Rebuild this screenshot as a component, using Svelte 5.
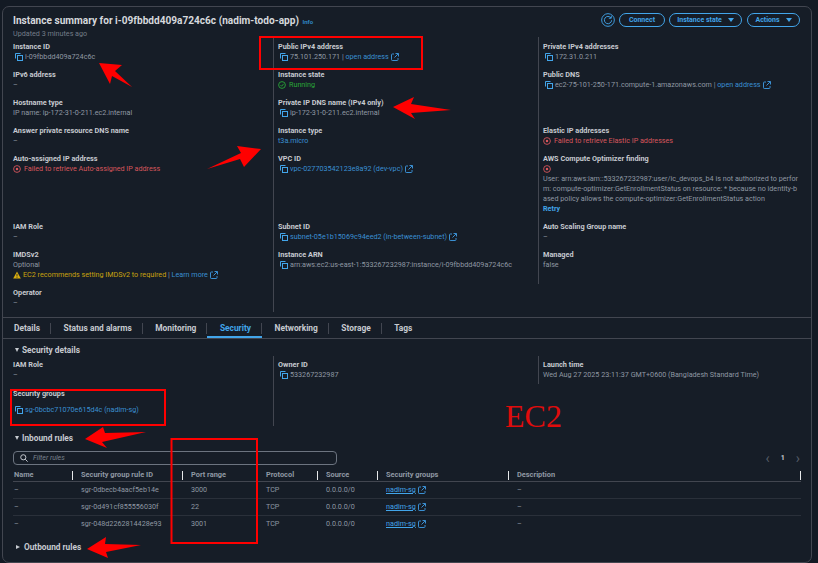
<script>
  const tabs = ["Details", "Status and alarms", "Monitoring", "Security", "Networking", "Storage", "Tags"];
  const active = "Security";
  const rules = [
    { id: "sgr-0dbecb4aacf5eb14e", port: "3000" },
    { id: "sgr-0d491cf855556030f", port: "22" },
    { id: "sgr-048d2262814428e93", port: "3001" },
  ];
  const columns = ["Name", "Security group rule ID", "Port range", "Protocol", "Source", "Security groups", "Description"];
</script>

{#snippet copy()}
  <svg class="copy" viewBox="0 0 8 8" fill="none" stroke="currentColor" stroke-width="1">
    <path d="M.5 5.500V.5H5.500" />
    <rect x="2.500" y="2.500" width="5" height="5" />
  </svg>
{/snippet}

{#snippet ext()}
  <svg class="ext" viewBox="0 0 8 8" fill="none" stroke="currentColor" stroke-width="1">
    <path d="M3 1H1.200a.7.7 0 0 0-.7.7v5.100c0 .4.3.7.7.7h5.100c.4 0 .7-.3.7-.7V5" />
    <path d="M4.500.5h3v3M7.300.7 3.500 4.500" />
  </svg>
{/snippet}

{#snippet fail()}
  <svg class="fail" viewBox="0 0 9 9" fill="none" stroke="currentColor">
    <circle cx="4.500" cy="4.500" r="3.800" stroke-width="1" />
    <circle cx="4.500" cy="4.500" r="1.400" fill="currentColor" stroke="none" />
  </svg>
{/snippet}

<div class="card">
  <header class="head">
    <div>
      <h1>Instance summary for i-09fbbdd409a724c6c (nadim-todo-app) <span class="info">Info</span></h1>
      <p class="updated">Updated 3 minutes ago</p>
    </div>
    <div class="actions">
      <svg class="refresh" viewBox="0 0 15 15" fill="none" stroke="currentColor">
        <circle cx="7.500" cy="7.500" r="6.800" stroke-width="1" />
        <path d="M10.600 5.200a3.900 3.900 0 1 0 .8 2.600" stroke-width="1" />
        <path d="M11 3v2.600H8.400" stroke-width="1" />
      </svg>
      <button class="connect">Connect</button>
      <button class="state">Instance state <i class="down"></i></button>
      <button class="act">Actions <i class="down"></i></button>
    </div>
  </header>

  <div class="grid">
    <div class="cell"><h3>Instance ID</h3><p class="val">{@render copy()}i-09fbbdd409a724c6c</p></div>
    <div class="cell rule"><h3>Public IPv4 address</h3><p class="val">{@render copy()}75.101.250.171 | <a>open address</a>{@render ext()}</p></div>
    <div class="cell rule"><h3>Private IPv4 addresses</h3><p class="val">{@render copy()}172.31.0.211</p></div>

    <div class="cell"><h3>IPv6 address</h3><p>–</p></div>
    <div class="cell rule"><h3>Instance state</h3><p class="running">
      <svg class="fail" viewBox="0 0 9 9" fill="none" stroke="currentColor"><circle cx="4.500" cy="4.500" r="3.800" /><path d="M2.800 4.600 4.100 5.900 6.300 3.200" /></svg>Running</p></div>
    <div class="cell rule"><h3>Public DNS</h3><p class="val">{@render copy()}ec2-75-101-250-171.compute-1.amazonaws.com | <a>open address</a>{@render ext()}</p></div>

    <div class="cell"><h3>Hostname type</h3><p>IP name: ip-172-31-0-211.ec2.internal</p></div>
    <div class="cell rule"><h3>Private IP DNS name (IPv4 only)</h3><p class="val">{@render copy()}ip-172-31-0-211.ec2.internal</p></div>
    <div class="cell rule"></div>

    <div class="cell"><h3>Answer private resource DNS name</h3><p>–</p></div>
    <div class="cell rule"><h3>Instance type</h3><p><a>t3a.micro</a></p></div>
    <div class="cell rule"><h3>Elastic IP addresses</h3><p class="err">{@render fail()}Failed to retrieve Elastic IP addresses</p></div>

    <div class="cell"><h3>Auto-assigned IP address</h3><p class="err">{@render fail()}Failed to retrieve Auto-assigned IP address</p></div>
    <div class="cell rule"><h3>VPC ID</h3><p class="val">{@render copy()}<a>vpc-027703542123e8a92 (dev-vpc)</a>{@render ext()}</p></div>
    <div class="cell rule">
      <h3>AWS Compute Optimizer finding</h3>
      <p class="err">{@render fail()}</p>
      <p>User: arn:aws:iam::533267232987:user/ic_devops_b4 is not authorized to perfor<br />m: compute-optimizer:GetEnrollmentStatus on resource: * because no identity-b<br />ased policy allows the compute-optimizer:GetEnrollmentStatus action</p>
      <p><a class="retry">Retry</a></p>
    </div>

    <div class="cell"><h3>IAM Role</h3><p>–</p></div>
    <div class="cell rule"><h3>Subnet ID</h3><p class="val">{@render copy()}<a>subnet-05e1b15069c94eed2 (in-between-subnet)</a>{@render ext()}</p></div>
    <div class="cell rule"><h3>Auto Scaling Group name</h3><p>–</p></div>

    <div class="cell"><h3>IMDSv2</h3><p>Optional</p><p class="warn">
      <svg class="fail tri-warn" viewBox="0 0 9 9"><path d="M4.500.6 8.800 8.400H.2Z" fill="#d9ae0f" /><path d="M4.500 3.200v2.800M4.500 6.600v1" stroke="#161d26" stroke-width=".9" /></svg>EC2 recommends setting IMDSv2 to required <span class="bar">|</span> <a>Learn more</a>{@render ext()}</p></div>
    <div class="cell rule"><h3>Instance ARN</h3><p class="val">{@render copy()}arn:aws:ec2:us-east-1:533267232987:instance/i-09fbbdd409a724c6c</p></div>
    <div class="cell rule"><h3>Managed</h3><p>false</p></div>

    <div class="cell"><h3>Operator</h3><p>–</p></div>
    <div class="cell rule"></div>
  </div>

  <nav class="tabs">
    {#each tabs as tab}
      <span class="tab" class:on={tab === active}>{tab}</span>
    {/each}
  </nav>

  <section class="security">
    <h2><i class="tri"></i>Security details</h2>
    <div class="grid details">
      <div class="cell"><h3>IAM Role</h3><p>–</p></div>
      <div class="cell rule"><h3>Owner ID</h3><p class="val">{@render copy()}533267232987</p></div>
      <div class="cell rule"><h3>Launch time</h3><p>Wed Aug 27 2025 23:11:37 GMT+0600 (Bangladesh Standard Time)</p></div>
      <div class="cell"><h3>Security groups</h3><p class="val sg">{@render copy()}<a>sg-0bcbc71070e615d4c (nadim-sg)</a></p></div>
      <div class="cell rule"></div>
    </div>

    <h2 class="inbound"><i class="tri"></i>Inbound rules</h2>
    <div class="filter-row">
      <div class="filter">
        <svg viewBox="0 0 9 9" fill="none" stroke="currentColor" stroke-width="1.100"><circle cx="3.700" cy="3.700" r="2.900" /><path d="M5.900 5.900 8.600 8.600" /></svg>
        <em>Filter rules</em>
      </div>
      <div class="pager"><span class="arrow">‹</span><b>1</b><span class="arrow">›</span></div>
    </div>

    <table>
      <thead>
        <tr>
          {#each columns as col}
            <th><div class="th">{col}</div></th>
          {/each}
        </tr>
      </thead>
      <tbody>
        {#each rules as r}
          <tr>
            <td>–</td>
            <td>{r.id}</td>
            <td>{r.port}</td>
            <td>TCP</td>
            <td>0.0.0.0/0</td>
            <td><a class="sglink">nadim-sg</a>{@render ext()}</td>
            <td>–</td>
          </tr>
        {/each}
      </tbody>
    </table>

    <h2 class="outbound"><i class="tri closed"></i>Outbound rules</h2>
  </section>
</div>

<!-- annotations drawn on top of the screenshot -->
<svg class="marks" viewBox="0 0 818 563" fill="none">
  <g stroke="#f00" stroke-width="2">
    <rect x="260" y="37" width="162" height="32" />
    <rect x="11" y="390" width="154" height="35" />
    <rect x="171.500" y="439" width="85.500" height="104" />
  </g>
  <g fill="#f00">
    <polygon points="99,63 122,65 115,71 132,87 112,76 110,84" />
    <polygon points="393,107 414,97 411,104 451,110 411,113 415,119" />
    <polygon points="261,149 237,146 241,153 207,169 240,159 244,167" />
    <polygon points="85,439 103,427 105,433 146,432 102,442 107,448" />
    <polygon points="87,549 106,537 105,544 141,545 106,552 108,558" />
  </g>
</svg>
<div class="ec2">EC2</div>

<style>
  :global(body) {
    background: #131a24;
    font-family: Roboto, sans-serif;
    font-size: 7.200px;
    line-height: 10px;
    color: #8f98a3;
    overflow: hidden;
  }
  .card {
    box-sizing: border-box;
    width: 810px;
    height: 557px;
    margin: 6px 0 0 2px;
    padding: 0 10px;
    background: #161d27;
    border: 1px solid #424650;
    border-radius: 7px;
  }
  .head {
    display: flex;
    justify-content: space-between;
    height: 31px;
  }
  h1 {
    margin: 7px 0 0;
    font-size: 10.100px;
    line-height: 13px;
    font-weight: 700;
    color: #d5d8dc;
  }
  .info {
    font-size: 6px;
    color: #2f86c4;
    margin-left: 1px;
  }
  .updated {
    margin: 0;
    line-height: 11px;
    color: #737c87;
  }
  .actions {
    display: flex;
    align-items: center;
    gap: 4px;
    height: 14px;
    margin: 6px 1px 0 0;
    color: #42a5ea;
  }
  .refresh {
    width: 14px;
    height: 14px;
  }
  button {
    display: flex;
    align-items: center;
    justify-content: center;
    gap: 6px;
    box-sizing: border-box;
    height: 14px;
    padding: 0;
    background: none;
    border: 1px solid #42a5ea;
    border-radius: 8px;
    color: #42a5ea;
    font: 700 7px Roboto, sans-serif;
  }
  .connect { width: 46px; }
  .state { width: 73px; }
  .act { width: 53px; margin-left: 1px; }
  .down {
    border: 3px solid transparent;
    border-top: 4px solid #42a5ea;
    border-bottom: 0;
  }
  .grid {
    display: grid;
    grid-template-columns: 260px 265px 1fr;
    margin-top: -1px;
  }
  .cell {
    padding: 4px 0;
  }
  .cell:nth-child(-n + 3) {
    padding-top: 5px;
  }
  .rule {
    padding-left: 4px;
    border-left: 1px solid #424650;
  }
  h3 {
    margin: 0;
    font-size: 7.300px;
    line-height: 10px;
    font-weight: 700;
    color: #c6cad0;
  }
  p {
    margin: 0;
    white-space: nowrap;
  }
  a {
    color: #3a8fd2;
  }
  .val {
    display: flex;
    align-items: center;
    white-space: pre;
  }
  .copy {
    width: 8px;
    height: 8px;
    margin: 0 2px 0 2px;
    color: #42a5ea;
    flex: none;
  }
  .ext {
    width: 8px;
    height: 8px;
    margin-left: 2px;
    vertical-align: -1.500px;
    color: #3a8fd2;
    flex: none;
  }
  .fail {
    width: 8px;
    height: 8px;
    margin-right: 3px;
    vertical-align: -1.500px;
  }
  .tri-warn {
    margin-right: 2px;
  }
  .err {
    color: #d9565c;
  }
  .running {
    color: #2aa838;
  }
  .warn {
    color: #c9a30e;
  }
  .bar {
    color: #8f98a3;
  }
  .retry {
    font-weight: 700;
    color: #42a5ea;
  }
  .tabs {
    display: flex;
    height: 22px;
    margin: 5px -10px 0;
    border-top: 1px solid #424650;
    border-bottom: 1px solid #424650;
    box-sizing: border-box;
  }
  .tab {
    position: relative;
    padding: 0 11px 0 12.500px;
    font-size: 8.400px;
    font-weight: 700;
    line-height: 21px;
    color: #c6cad0;
  }
  .tab:first-child {
    padding-left: 11px;
  }
  .tab:not(:last-child)::after {
    content: "";
    position: absolute;
    right: 0;
    top: 5px;
    height: 11px;
    width: 1px;
    background: #424650;
  }
  .on {
    color: #42a5ea;
    box-shadow: inset 0 -2px 0 #42a5ea;
  }
  .security h2 {
    display: flex;
    align-items: center;
    margin: 5px 0 0;
    font-size: 8.300px;
    line-height: 12px;
    font-weight: 700;
    color: #c6cad0;
  }
  .tri {
    margin: 0 3px 0 2px;
    border: 2.500px solid transparent;
    border-top: 4px solid #c6cad0;
    border-bottom: 0;
  }
  .tri.closed {
    margin: 0 4px 0 3px;
    border: 2.500px solid transparent;
    border-left: 4px solid #c6cad0;
    border-right: 0;
  }
  .details {
    grid-template-rows: 28px 42px;
    margin-top: 0;
  }
  .details .cell {
    padding-top: 4px;
    padding-bottom: 0;
  }
  .details .cell:nth-child(n + 4) {
    padding-top: 5px;
  }
  .sg {
    margin-top: 6px;
  }
  .security h2.inbound {
    margin-top: 6px;
  }
  .filter-row {
    display: flex;
    align-items: center;
    justify-content: space-between;
    margin-top: 7px;
  }
  .filter {
    display: flex;
    align-items: center;
    gap: 5px;
    box-sizing: border-box;
    width: 324px;
    height: 14px;
    padding-left: 6px;
    border: 1px solid #6c7480;
    border-radius: 4px;
    color: #8f98a3;
  }
  .filter svg {
    width: 8px;
    height: 8px;
    color: #c6cad0;
  }
  .filter em {
    font-size: 7px;
    color: #79828d;
  }
  .pager {
    display: flex;
    align-items: center;
    gap: 11px;
    margin: 0 1px 0 0;
    color: #c6cad0;
    font-size: 7px;
  }
  .arrow {
    font-size: 14px;
    color: #545b66;
  }
  table {
    width: 788px;
    margin-top: 4px;
    border-collapse: collapse;
    table-layout: fixed;
  }
  th {
    height: 12px;
    padding: 0 0 0 1px;
    border-bottom: 1px solid #424650;
    text-align: left;
    font-size: 7.400px;
    font-weight: 700;
    color: #8f98a3;
  }
  th:nth-child(1) { width: 66px; }
  th:nth-child(2) { width: 109px; }
  th:nth-child(3) { width: 74px; }
  th:nth-child(4) { width: 59px; }
  th:nth-child(5) { width: 59px; }
  th:nth-child(6) { width: 130px; }
  .th {
    display: flex;
    align-items: center;
    justify-content: space-between;
    padding-right: 7px;
  }
  .th::after {
    content: "";
    width: 1px;
    height: 9px;
    background: #e6e8ea;
  }
  th:nth-child(7) .th {
    padding-right: 0;
  }
  td {
    height: 16px;
    padding: 0 0 0 1px;
    border-bottom: 1px solid #2a303a;
    color: #8f98a3;
    white-space: nowrap;
  }
  tr:last-child td {
    border-bottom: 0;
  }
  .sglink {
    text-decoration: underline;
    color: #42a5ea;
  }
  .security h2.outbound {
    margin-top: 9px;
  }
  .marks {
    position: absolute;
    left: 0;
    top: 0;
    width: 818px;
    height: 563px;
    pointer-events: none;
  }
  .ec2 {
    position: absolute;
    left: 505px;
    top: 400px;
    font: 32px/32px "Liberation Serif", serif;
    color: #e00c0c;
  }
</style>
